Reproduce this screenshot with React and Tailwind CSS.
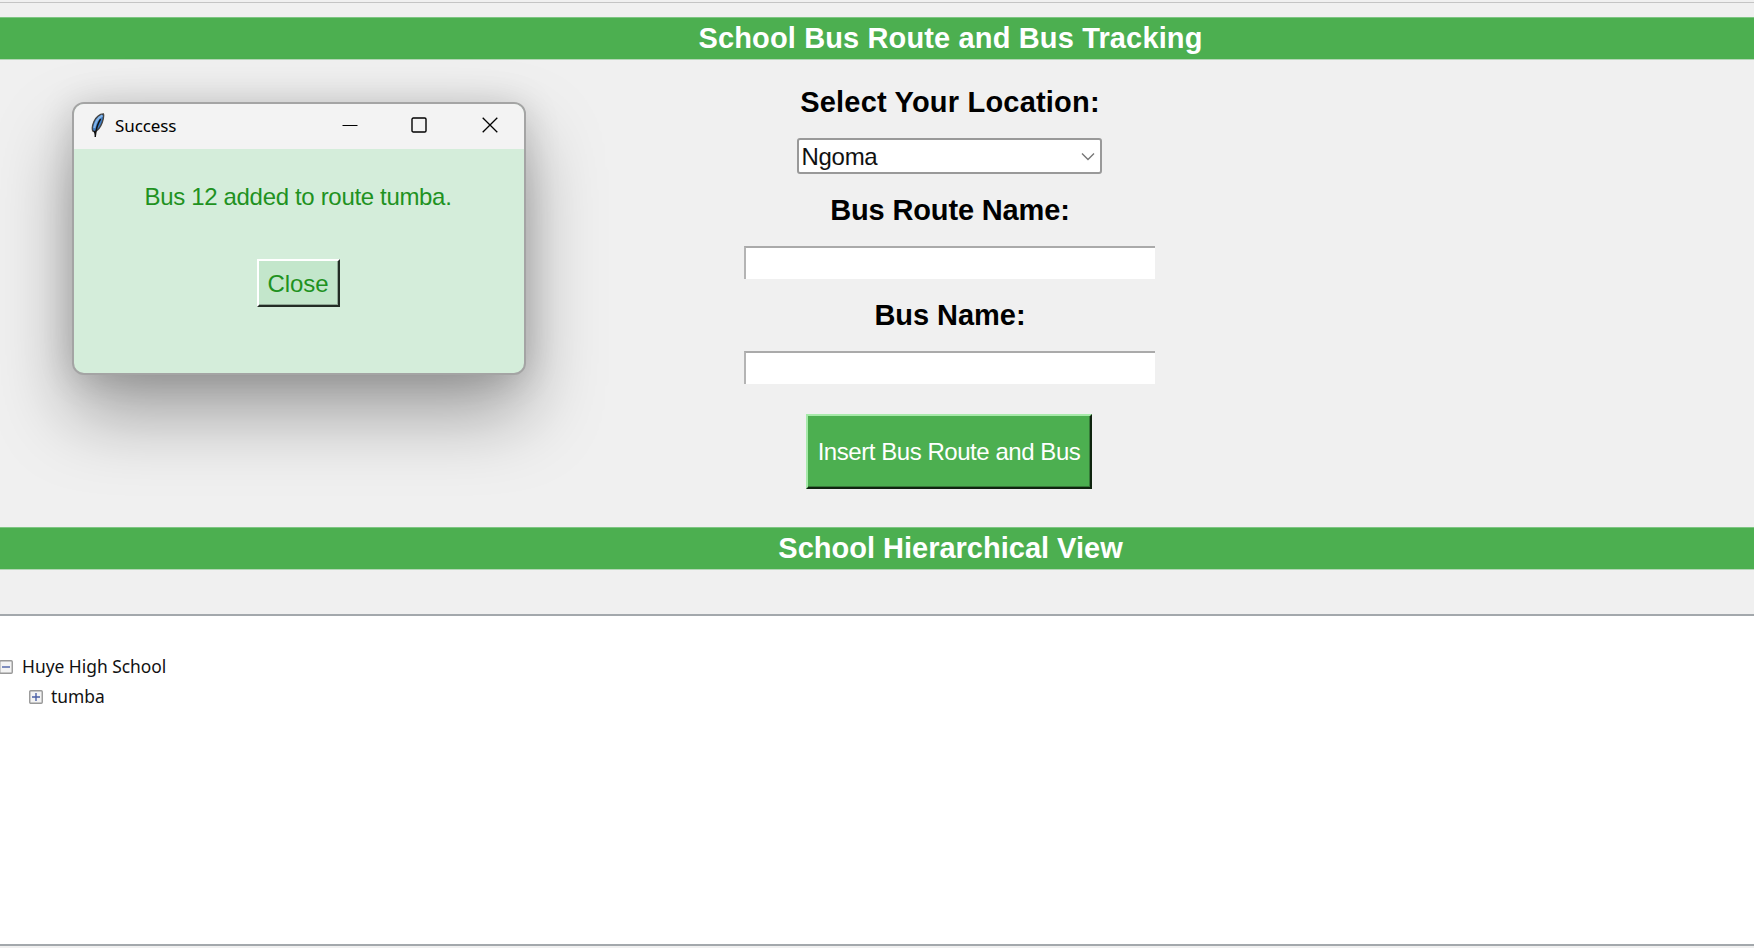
function Band({ children, className }) {
  return (
    <div className={`flex h-[42px] shrink-0 items-center justify-center border-t border-[#7fc683] bg-[#4caf50] pl-[147px] text-[29px] leading-none font-bold text-white shadow-[0_1px_0_#b4d6b6] ${className}`}>
      <span>{children}</span>
    </div>
  );
}

function Label({ children, className }) {
  return (
    <label className={`block text-[29px] leading-[32px] font-bold whitespace-nowrap text-black ${className}`}>
      {children}
    </label>
  );
}

function Entry({ className }) {
  return (
    <div className={`mr-[2px] h-[33px] w-[411px] border-t-2 border-l-2 border-t-[#aaaaaa] border-l-[#b4b4b4] bg-white ${className}`} />
  );
}

function Toggle({ open }) {
  return (
    <svg width="14" height="14" viewBox="0 0 14 14" className="shrink-0">
      <rect x="0.75" y="0.75" width="12.5" height="12.5" rx="1" fill="#f3f3f3" stroke="#989898" strokeWidth="1.4" />
      <path d={open ? "M3 7h8" : "M3 7h8M7 3v8"} stroke="#4a5fa5" strokeWidth="1.4" />
    </svg>
  );
}

function Feather() {
  return (
    <svg width="14" height="25" viewBox="0 0 14 25" className="shrink-0">
      <path d="M12.4 1C8.5 1.2 5 4.5 3 8.5C1.4 12 1 15.8 1.8 18L3.6 18.8C6.8 17.5 9.6 14 11.2 9.5C12.4 6 13 3 12.4 1Z" fill="#3d7cc4" stroke="#454545" strokeWidth="1.4" />
      <path d="M11.4 2.5C7.5 4.5 4.3 9 3.2 15" fill="none" stroke="#82b4ea" strokeWidth="2" />
      <path d="M9.6 6C7 10 5 15 4.2 24" fill="none" stroke="#111" strokeWidth="1.4" />
      <path d="M2.4 17.5L5.2 18.5L4.3 24Z" fill="#111" />
    </svg>
  );
}

function Dialog() {
  return (
    <div className="absolute top-[102px] left-[72px] flex h-[273px] w-[454px] flex-col overflow-hidden rounded-[12px] border-2 border-[#a4a4a4] bg-[#d4edda] shadow-[0_38px_76px_rgba(0,0,0,0.35),0_2px_36px_rgba(0,0,0,0.14)]">
      <div className="flex h-[45px] shrink-0 items-center bg-[#f3f3f3] pr-[26px] pb-[3px] pl-[17px]">
        <Feather />
        <span className="ml-[10px] font-['Noto_Sans'] text-[17px] leading-none tracking-[-0.1px] text-black">Success</span>
        <div className="ml-auto flex items-center">
          <svg width="16" height="16" viewBox="0 0 16 16"><path d="M0.5 8.5h15" stroke="#000" strokeWidth="1" /></svg>
          <svg width="16" height="16" viewBox="0 0 16 16" className="ml-[53px]"><rect x="1" y="1" width="14" height="14" rx="1.3" fill="none" stroke="#000" strokeWidth="1.4" /></svg>
          <svg width="16" height="16" viewBox="0 0 16 16" className="ml-[55px]"><path d="M0.7 0.7L15.3 15.3M15.3 0.7L0.7 15.3" stroke="#000" strokeWidth="1.3" /></svg>
        </div>
      </div>
      <div className="flex flex-col items-center pr-[2px]">
        <p className="mt-[34px] text-[24px] leading-[28px] tracking-[-0.33px] whitespace-nowrap text-[#1f921f]">Bus 12 added to route tumba.</p>
        <button className="mt-[48px] flex h-[48px] w-[83px] items-center justify-center border-2 border-t-white border-r-[#222c24] border-b-[#222c24] border-l-white bg-[#c3e6cb] pt-px text-[24px] leading-none tracking-[-0.1px] text-[#1f921f] shadow-[inset_-1px_-1px_0_#8fa895]">
          Close
        </button>
      </div>
    </div>
  );
}

export default function App() {
  return (
    <div className="relative flex h-[948px] w-[1754px] flex-col overflow-hidden bg-[#f0f0f0] font-['Liberation_Sans',sans-serif]">
      <div className="mt-[2px] mb-[14px] h-px shrink-0 bg-[#c4c4c4]" />
      <Band className="tracking-[0.14px]">School Bus Route and Bus Tracking</Band>

      <div className="flex h-[468px] shrink-0 flex-col items-center pl-[146px]">
        <Label className="mt-[27px] tracking-[0.2px]">Select Your Location:</Label>
        <div className="mt-[20px] mr-[2px] flex h-[36px] w-[305px] items-center justify-between rounded-[3px] border-2 border-[#999] bg-white pt-px pr-[5px] pl-[3px] text-[24px] leading-none tracking-[-0.3px] text-[#111]">
          <span>Ngoma</span>
          <svg width="14" height="9" viewBox="0 0 14 9"><path d="M1 1.5L7 7.5L13 1.5" fill="none" stroke="#777" strokeWidth="1.4" /></svg>
        </div>
        <Label className="mt-[20px] tracking-[-0.15px]">Bus Route Name:</Label>
        <Entry className="mt-[20px]" />
        <Label className="mt-[20px] tracking-[-0.05px]">Bus Name:</Label>
        <Entry className="mt-[20px]" />
        <button className="mt-[30px] mr-[2px] flex h-[75px] w-[286px] items-center justify-center border-2 border-t-[#a6eaa9] border-r-[#0f240f] border-b-[#0f240f] border-l-[#a6eaa9] bg-[#4caf50] text-[24px] leading-none tracking-[-0.45px] whitespace-nowrap text-white shadow-[inset_-1px_-1px_0_#357a38]">
          Insert Bus Route and Bus
        </button>
      </div>

      <Band className="tracking-[0px]">School Hierarchical View</Band>

      <div className="mt-[45px] h-[332px] shrink-0 border-y-2 border-[#a3a8ac] bg-white pt-[36px] font-['Noto_Sans'] text-[17.4px] text-[#111]">
        <div className="flex h-[30px] items-center">
          <span className="-ml-px flex"><Toggle open /></span>
          <span className="ml-[9px] pb-px whitespace-nowrap">Huye High School</span>
        </div>
        <div className="flex h-[30px] items-center pl-[29px]">
          <Toggle />
          <span className="ml-[8px] pb-px">tumba</span>
        </div>
      </div>

      <Dialog />
    </div>
  );
}
